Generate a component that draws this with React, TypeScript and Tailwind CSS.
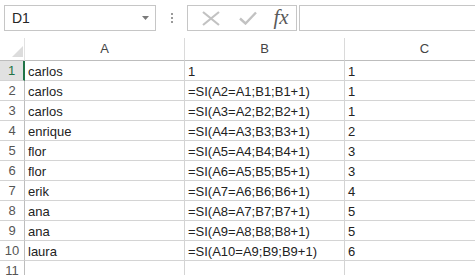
import React from "react";

const rows: [string, string, string][] = [
  ["carlos", "1", "1"],
  ["carlos", "=SI(A2=A1;B1;B1+1)", "1"],
  ["carlos", "=SI(A3=A2;B2;B2+1)", "1"],
  ["enrique", "=SI(A4=A3;B3;B3+1)", "2"],
  ["flor", "=SI(A5=A4;B4;B4+1)", "3"],
  ["flor", "=SI(A6=A5;B5;B5+1)", "3"],
  ["erik", "=SI(A7=A6;B6;B6+1)", "4"],
  ["ana", "=SI(A8=A7;B7;B7+1)", "5"],
  ["ana", "=SI(A9=A8;B8;B8+1)", "5"],
  ["laura", "=SI(A10=A9;B9;B9+1)", "6"],
  ["", "", ""],
];

export default function App() {
  return (
    <div
      className="w-[475px] h-[275px] overflow-hidden bg-white text-[#222]"
      style={{ fontFamily: '"Liberation Sans", Arial, sans-serif' }}
    >
      <div className="w-[520px]">
        {/* Toolbar */}
        <div className="h-[38px] flex items-start pt-[5px] pl-[4px]">
          <div className="w-[152px] h-[26px] border border-[#c6c6c6] flex items-center justify-between pl-[7px] pr-[6px]">
            <span className="text-[14px] leading-none text-[#262626]">D1</span>
            <svg width="7" height="4" viewBox="0 0 7 4">
              <path d="M0 0 H7 L3.5 4 Z" fill="#7a7a7a" />
            </svg>
          </div>
          <div className="w-[31px] h-[26px] flex flex-col items-center justify-center gap-[2px]">
            <span className="w-[2px] h-[2px] bg-[#9a9a9a]" />
            <span className="w-[2px] h-[2px] bg-[#9a9a9a]" />
            <span className="w-[2px] h-[2px] bg-[#9a9a9a]" />
          </div>
          <div className="w-[110px] h-[26px] border border-[#c6c6c6] flex items-center">
            <div className="w-[37px] flex justify-center pl-[8px]">
              <svg width="18" height="15" viewBox="0 0 18 15">
                <path d="M1 1 L17 14 M17 1 L1 14" stroke="#c2c2c2" strokeWidth="2.2" fill="none" />
              </svg>
            </div>
            <div className="w-[37px] flex justify-center pl-[8px]">
              <svg width="18" height="14" viewBox="0 0 18 14">
                <path d="M1 7.5 L6.5 12.5 L17 1.5" stroke="#c2c2c2" strokeWidth="2.4" fill="none" />
              </svg>
            </div>
            <div className="flex-1 flex justify-center pl-[4px]">
              <span
                className="italic text-[21px] leading-none text-[#5a5a5a] -mt-[2px]"
                style={{ fontFamily: '"Liberation Serif", "Times New Roman", serif' }}
              >
                fx
              </span>
            </div>
          </div>
          <div className="ml-[2px] flex-1 h-[26px] border border-[#c6c6c6]" />
        </div>

        {/* Grid */}
        <div className="grid grid-cols-[25px_160px_160px_160px]">
          {/* header row */}
          <div className="relative h-[23px] border-b border-r border-[#bdbdbd] border-r-[#e2e2e2]">
            <svg className="absolute left-[12px] top-[8px]" width="11" height="11" viewBox="0 0 11 11">
              <path d="M11 0 V11 H0 Z" fill="#dcdcdc" />
            </svg>
          </div>
          {["A", "B", "C"].map((c) => (
            <div
              key={c}
              className="h-[23px] border-b border-r border-[#bdbdbd] border-r-[#dadada] flex items-center justify-center text-[13px] text-[#444]"
            >
              {c}
            </div>
          ))}

          {rows.map((r, i) => (
            <React.Fragment key={i}>
              <div
                className={
                  i === 0
                    ? "h-[20px] border-b border-b-[#d4d4d4] border-r-2 border-r-[#217346] bg-[#e1e1e1] flex items-center justify-center text-[13px] text-[#217346]"
                    : "h-[20px] border-b border-b-[#d4d4d4] border-r border-r-[#bdbdbd] flex items-center justify-center text-[13px] text-[#555]"
                }
              >
                {i + 1}
              </div>
              {r.map((v, j) => (
                <div
                  key={j}
                  className="h-[20px] border-b border-r border-[#d4d4d4] pl-[3px] pt-[2px] text-[13px] leading-[18px] whitespace-nowrap text-[#222]"
                >
                  {v}
                </div>
              ))}
            </React.Fragment>
          ))}
        </div>
      </div>
    </div>
  );
}
